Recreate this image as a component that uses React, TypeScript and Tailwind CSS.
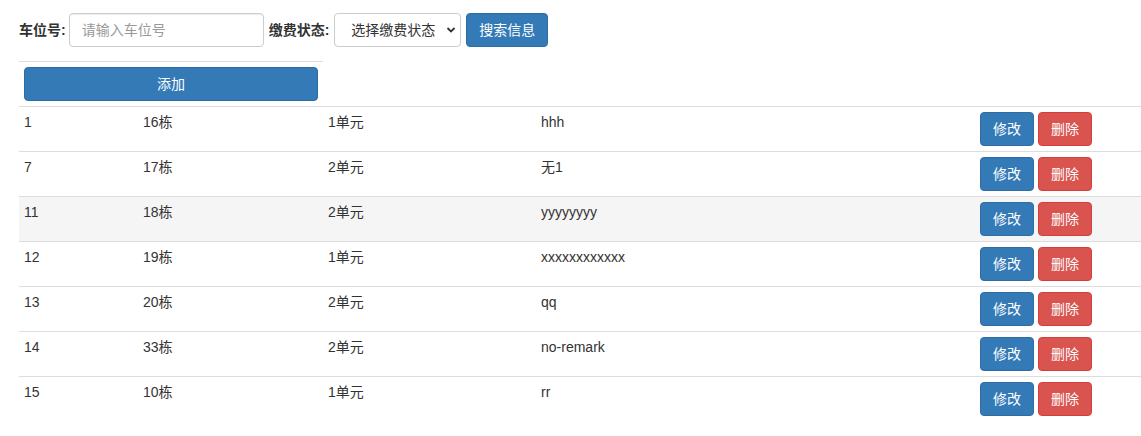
const rows = [
  { id: '1', building: '16栋', unit: '1单元', remark: 'hhh' },
  { id: '7', building: '17栋', unit: '2单元', remark: '无1' },
  { id: '11', building: '18栋', unit: '2单元', remark: 'yyyyyyyy' },
  { id: '12', building: '19栋', unit: '1单元', remark: 'xxxxxxxxxxxx' },
  { id: '13', building: '20栋', unit: '2单元', remark: 'qq' },
  { id: '14', building: '33栋', unit: '2单元', remark: 'no-remark' },
  { id: '15', building: '10栋', unit: '1单元', remark: 'rr' },
];

const App = () => {
  return (
    <div
      className="min-h-screen bg-white text-[14px] leading-[20px] text-[#333]"
      style={{ fontFamily: '"Liberation Sans", Arial, "Noto Sans CJK SC", sans-serif' }}
    >
      {/* 搜索栏 */}
      <div className="flex items-center pl-[19px] pt-[13px]">
        <label className="mr-[3px] font-bold">车位号:</label>
        <input
          placeholder="请输入车位号"
          className="h-[34px] w-[195px] rounded-[4px] border border-[#ccc] px-[12px] text-[14px] text-[#555] shadow-[inset_0_1px_1px_rgba(0,0,0,0.075)] outline-none placeholder:text-[#999]"
        />
        <label className="ml-[5px] mr-[5px] font-bold">缴费状态:</label>
        <div className="relative">
          <select className="h-[34px] w-[127px] appearance-none rounded-[4px] border border-[#ccc] bg-white pl-[16px] text-[14px] text-[#333] outline-none">
            <option>选择缴费状态</option>
          </select>
          <svg
            className="pointer-events-none absolute right-[5px] top-[13px]"
            width="10"
            height="8"
            viewBox="0 0 10 8"
          >
            <path d="M1.5 2 L5 5.5 L8.5 2" fill="none" stroke="#333" strokeWidth="1.8" />
          </svg>
        </div>
        <button className="ml-[5px] h-[34px] rounded-[4px] border border-[#2e6da4] bg-[#337ab7] px-[12px] text-white">
          搜索信息
        </button>
      </div>

      {/* 添加 */}
      <div className="ml-[19px] mt-[14px] w-[304px] border-t border-[#ddd] p-[5px]">
        <button className="h-[34px] w-full rounded-[4px] border border-[#2e6da4] bg-[#337ab7] text-white">
          添加
        </button>
      </div>

      {/* 列表 */}
      <table className="ml-[19px] w-[1122px] table-fixed border-collapse">
        <colgroup>
          <col className="w-[119px]" />
          <col className="w-[185px]" />
          <col className="w-[213px]" />
          <col className="w-[439px]" />
          <col />
        </colgroup>
        <tbody>
          {rows.map((r, i) => (
            <tr key={r.id} className={i === 2 ? 'bg-[#f5f5f5]' : ''}>
              <td className="border-t border-[#ddd] p-[5px] align-top">{r.id}</td>
              <td className="border-t border-[#ddd] p-[5px] align-top">{r.building}</td>
              <td className="border-t border-[#ddd] p-[5px] align-top">{r.unit}</td>
              <td className="border-t border-[#ddd] p-[5px] align-top">{r.remark}</td>
              <td className="border-t border-[#ddd] p-[5px] align-top">
                <div className="flex gap-[4px]">
                  <button className="h-[34px] rounded-[4px] border border-[#2e6da4] bg-[#337ab7] px-[12px] text-white">
                    修改
                  </button>
                  <button className="h-[34px] rounded-[4px] border border-[#d43f3a] bg-[#d9534f] px-[12px] text-white">
                    删除
                  </button>
                </div>
              </td>
            </tr>
          ))}
        </tbody>
      </table>
    </div>
  );
};

export default App;
